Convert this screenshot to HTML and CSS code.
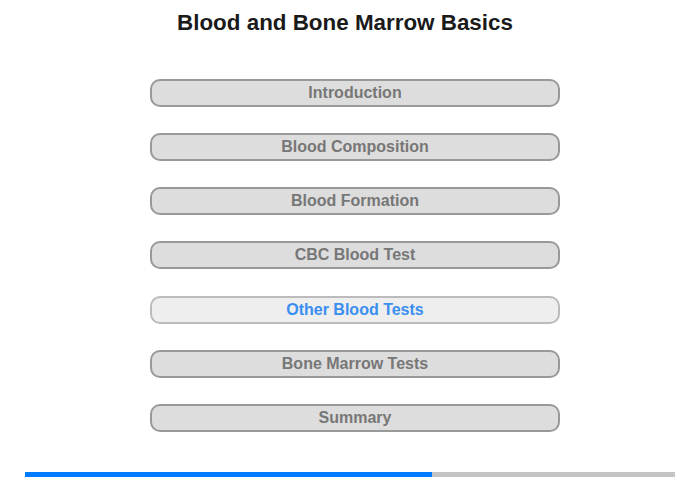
FILE: index.html
```html
<!DOCTYPE html>
<html>
<head>
<meta charset="utf-8">
<link rel="stylesheet" href="styles.css">
</head>
<body>
<div class="page">
  <h1 class="title">Blood and Bone Marrow Basics</h1>
  <nav class="menu">
    <div class="btn">Introduction</div>
    <div class="btn">Blood Composition</div>
    <div class="btn">Blood Formation</div>
    <div class="btn">CBC Blood Test</div>
    <div class="btn active">Other Blood Tests</div>
    <div class="btn">Bone Marrow Tests</div>
    <div class="btn">Summary</div>
  </nav>
  <div class="progress"><div class="fill" style="width:407px"></div></div>
</div>
</body>
</html>
```
FILE: styles.css
```css
html, body { margin: 0; padding: 0; background: #fff; }
body { font-family: "Liberation Sans", Arial, sans-serif; }
.page { width: 700px; height: 480px; position: relative; }
.title {
  margin: 0;
  padding-top: 10px;
  width: 690px;
  text-align: center;
  font-size: 22.4px;
  line-height: 26px;
  font-weight: bold;
  color: #1a1a1a;
}
.menu {
  margin-top: 43px;
  margin-left: 150px;
  width: 410px;
  display: flex;
  flex-direction: column;
  gap: 26.17px;
}
.btn {
  box-sizing: border-box;
  height: 28px;
  border: 2px solid #999;
  border-radius: 10px;
  background: #ddd;
  color: #777;
  font-weight: bold;
  font-size: 16px;
  line-height: 24px;
  text-align: center;
}
.btn.active {
  background: #eee;
  border-color: #bbb;
  color: #3a8ef0;
}
.progress {
  margin-top: 40px;
  margin-left: 25px;
  width: 650px;
  height: 5px;
  background: #c4c4c4;
}
.fill { height: 5px; background: #007bff; }
```
